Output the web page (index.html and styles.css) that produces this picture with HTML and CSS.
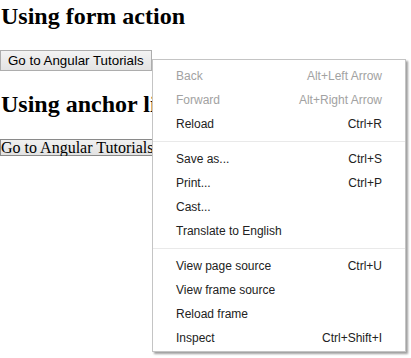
FILE: index.html
```html
<!DOCTYPE html>
<html>
<head>
<meta charset="utf-8">
<link rel="stylesheet" href="styles.css">
</head>
<body>
<div class="page">
  <h2 class="title first">Using form action</h2>
  <form class="form"><button type="button" class="btn-native">Go to Angular Tutorials</button></form>
  <h2 class="title second">Using anchor link</h2>
  <a class="link"><button type="button" class="btn-plain">Go to Angular Tutorials</button></a>
</div>
<div class="menu">
  <div class="item disabled"><span>Back</span><span>Alt+Left Arrow</span></div>
  <div class="item disabled"><span>Forward</span><span>Alt+Right Arrow</span></div>
  <div class="item"><span>Reload</span><span>Ctrl+R</span></div>
  <div class="sep"></div>
  <div class="item"><span>Save as...</span><span>Ctrl+S</span></div>
  <div class="item"><span>Print...</span><span>Ctrl+P</span></div>
  <div class="item"><span>Cast...</span></div>
  <div class="item"><span>Translate to English</span></div>
  <div class="sep"></div>
  <div class="item"><span>View page source</span><span>Ctrl+U</span></div>
  <div class="item"><span>View frame source</span></div>
  <div class="item"><span>Reload frame</span></div>
  <div class="item"><span>Inspect</span><span>Ctrl+Shift+I</span></div>
</div>
</body>
</html>
```
FILE: styles.css
```css
html, body {
  margin: 0;
  padding: 0;
  background: #fff;
}
body {
  width: 411px;
  height: 358px;
  overflow: hidden;
  position: relative;
  font-family: "Liberation Serif", "Times New Roman", serif;
  color: #000;
}
.page {
  display: flex;
  flex-direction: column;
  align-items: flex-start;
  padding: 2px 0 0 0;
}
.title {
  font-family: "Liberation Serif", "Times New Roman", serif;
  font-weight: bold;
  font-size: 24px;
  line-height: 28px;
  margin: 0 0 0 1px;
  white-space: nowrap;
}
.form {
  margin: 20px 0 0 0;
}
.btn-native {
  display: block;
  box-sizing: border-box;
  height: 21px;
  margin: 0;
  padding: 0 7px;
  font-family: "Liberation Sans", Arial, sans-serif;
  font-size: 13.33px;
  line-height: 19px;
  color: #000;
  background: linear-gradient(#f3f3f3, #e3e3e3);
  border: 1px solid #adadad;
  border-radius: 0;
  white-space: nowrap;
}
.title.second {
  margin-top: 19px;
  max-width: 151px;
  overflow: hidden;
}
.link {
  display: block;
  margin-top: 21px;
  max-width: 152px;
  overflow: hidden;
}
.btn-plain {
  display: block;
  box-sizing: border-box;
  height: 17px;
  margin: 0;
  padding: 0;
  font-family: "Liberation Serif", "Times New Roman", serif;
  font-size: 16px;
  line-height: 15px;
  color: #000;
  background: linear-gradient(#f0f0f0, #e2e2e2);
  border: 1px solid #8a8a8a;
  border-radius: 0;
  white-space: nowrap;
}
.menu {
  position: absolute;
  left: 152px;
  top: 59px;
  width: 252px;
  box-sizing: content-box;
  background: #fff;
  border: 1px solid #c4c4c4;
  box-shadow: 2px 2px 2px rgba(0, 0, 0, 0.38);
  padding: 4px 0 1px 0;
  font-family: "Liberation Sans", Arial, sans-serif;
  font-size: 12px;
  color: #222;
}
.item {
  display: flex;
  justify-content: space-between;
  align-items: center;
  height: 24px;
  padding: 0 23px 0 23px;
  white-space: nowrap;
}
.item.disabled {
  color: #a2a2a2;
}
.sep {
  height: 1px;
  background: #e9e9e9;
  margin: 5px 0;
}
```
